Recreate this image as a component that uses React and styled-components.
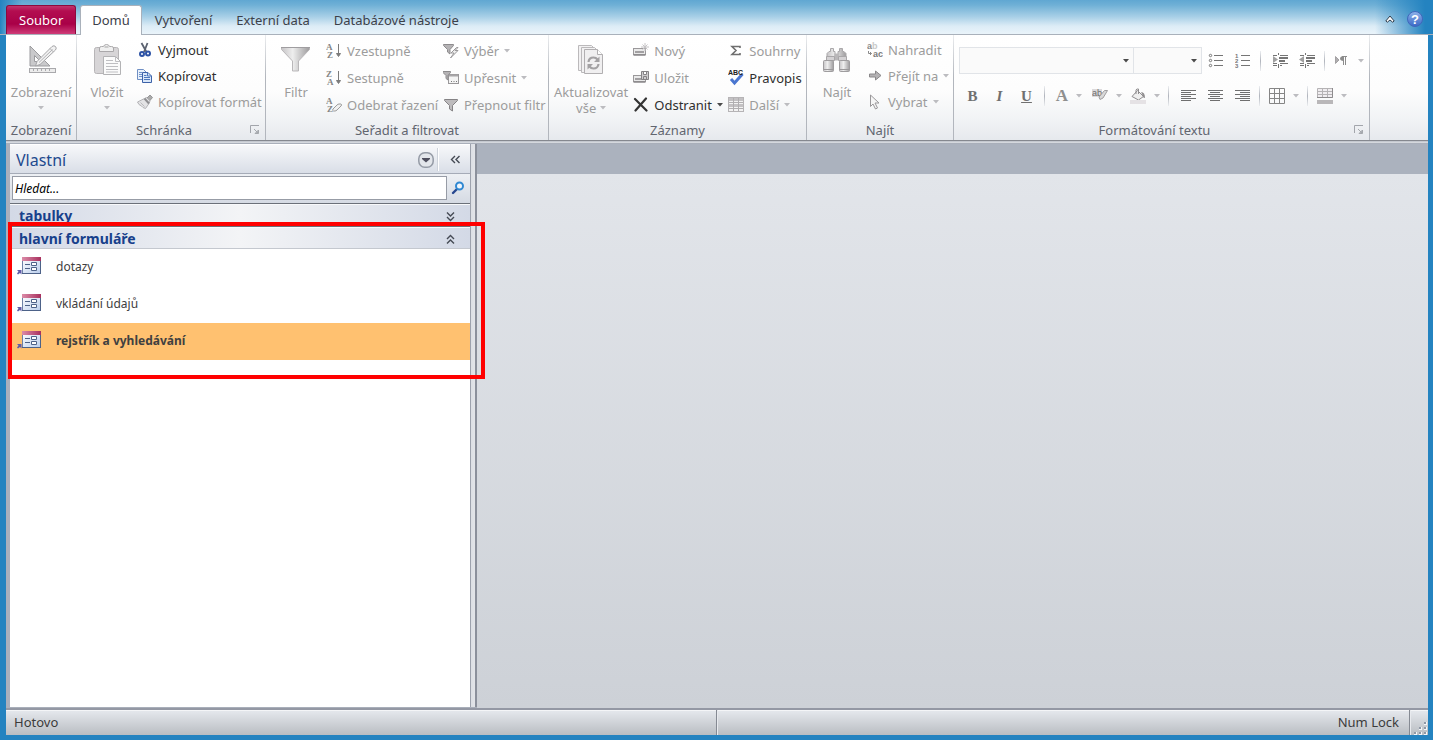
import React, { useState } from "react";
import styled, { createGlobalStyle, css } from "styled-components";

const GlobalStyle = createGlobalStyle`
    * {
        box-sizing: border-box;
    }

    body {
        margin: 0;
        font-family: "Noto Sans", "Open Sans", sans-serif;
        font-size: 13px;
        line-height: 16px;
        color: #3b3b3b;
    }

    button, input, select {
        font: inherit;
        color: inherit;
        margin: 0;
    }

    button {
        padding: 0;
        border: 0;
        background: none;
        white-space: nowrap;
    }
`

const Window = styled.div`
    display: flex;
    flex-direction: column;
    min-height: 100vh;
    padding: 0 5px 5px 6px;
    background: #2483c0;
`

/* tabs */

const TabBar = styled.header`
    display: flex;
    align-items: flex-end;
    height: 35px;
    margin: 0 -5px 0 -6px;
    padding: 5px 10px 0 6px;
    border-bottom: 1px solid #a9b1bb;
    background:
        linear-gradient(to right, #2483c0 0, rgba(36, 131, 192, 0) 22px),
        linear-gradient(to left, #2483c0 0, #2483c0 8px, rgba(36, 131, 192, 0) 58px),
        linear-gradient(#60a7d2 0, #6fb0d6 5px, #a9d0e7 17px, #dcecf6 26px, #eaf4fa 34px);
`
const FileTab = styled.button`
    height: 29px;
    padding: 0 12px;
    margin-right: 4px;
    border: 1px solid #8c0a3c;
    border-bottom: 0;
    border-radius: 3px 3px 0 0;
    background: linear-gradient(#c0356b 0, #b30d50 5px, #a90047 18px, #cf3c78 28px);
    color: white;
`
const Tab = styled.button`
    height: 29px;
    padding: 0 12px;
    color: #3c4049;

    ${({ $active }) => $active && css`
        height: 30px;
        margin: 0 1px -1px 0;
        border: 1px solid #a9b1bb;
        border-bottom: 0;
        border-radius: 3px 3px 0 0;
        padding: 0 11px 1px;
        background: white;
    `}
`
const TabTools = styled.div`
    display: flex;
    align-items: center;
    gap: 12px;
    height: 29px;
    margin-left: auto;
    padding-bottom: 2px;

    button {
        display: flex;
    }
`

/* ribbon */

const RibbonBox = styled.section`
    display: flex;
    height: 106px;
    background: linear-gradient(#ffffff 0, #fdfdfd 55px, #f1f3f5 85px, #e6e9ed 105px);
    border-bottom: 1px solid #85888f;
`
const RibbonEdge = styled.div`
    height: 3px;
    border-bottom: 1px solid #a9afba;
    background: linear-gradient(#bcc0c8, #dde0e5);
`
const Group = styled.div`
    display: flex;
    flex-direction: column;
    flex: none;
    min-width: ${({ $min }) => $min}px;
    padding: 0 1px;
    border-right: 1px solid;
    border-image: linear-gradient(#eceef0, #b2b6bd 40%, #b2b6bd) 1;
`
const GroupBody = styled.div`
    display: flex;
    flex: 1;
    padding-left: ${({ $pad = 4 }) => $pad}px;
`
const GroupTitle = styled.div`
    display: flex;
    align-items: center;
    height: 18px;
    padding-bottom: 2px;
    color: #61656f;

    span {
        flex: 1;
        text-align: center;
        white-space: nowrap;
    }

    button {
        display: flex;
        width: 14px;
    }
`
const BigButton = styled.button`
    display: flex;
    flex-direction: column;
    align-items: center;
    min-width: ${({ $min }) => $min}px;
    padding-top: 9px;
    color: #9c9c9c;

    > svg {
        margin-bottom: 8px;
    }
`
const MenuMark = styled.span`
    display: flex;
    align-items: center;
    gap: 4px;
    min-height: 16px;
`
const Spacer = styled.span`
    width: 5px;
`
const Column = styled.div`
    display: grid;
    grid-auto-rows: ${({ $row = 27 }) => $row}px;
    align-content: start;
    min-width: ${({ $min }) => $min}px;
    padding-top: 2px;
`
const SmallButton = styled.button`
    display: flex;
    align-items: center;
    gap: 5px;
    color: ${({ disabled }) => (disabled ? "#9c9c9c" : "#2f2f2f")};
`
const FormatTools = styled.div`
    display: flex;
    flex-direction: column;
    gap: 8px;
    padding-top: 12px;
`
const ToolRow = styled.div`
    display: flex;
    align-items: center;
    height: 27px;
`
const Tool = styled.button`
    display: flex;
    align-items: center;
    justify-content: center;
    gap: 8px;
    width: ${({ $split }) => ($split ? 38 : 27)}px;
    height: 26px;
`
const Letter = styled.span`
    font-family: "Liberation Serif", serif;
    font-size: ${({ $big }) => ($big ? 17 : 15)}px;
    font-weight: bold;
    font-style: ${({ $italic }) => ($italic ? "italic" : "normal")};
    text-decoration: ${({ $underline }) => ($underline ? "underline" : "none")};
    color: ${({ $big }) => ($big ? "#8f8f8f" : "#707070")};
`
const Divider = styled.span`
    width: 1px;
    height: 20px;
    margin: 0 5px 0 4px;
    background: linear-gradient(#eceef1, #b0b4bc, #eceef1);
`
const Picker = styled.label`
    display: flex;
    align-items: center;
    width: ${({ $width }) => $width}px;
    height: 27px;
    padding-right: 4px;
    border: 1px solid #e1e4e8;
    background: #fafafa;

    & + & {
        margin-left: -1px;
    }

    select {
        flex: 1;
        min-width: 0;
        height: 25px;
        border: 0;
        appearance: none;
        background: none;
        opacity: 1;
    }
`

/* navigation pane */

const Workspace = styled.main`
    display: flex;
    flex: 1;
`
const Pane = styled.aside`
    display: flex;
    flex-direction: column;
    width: 471px;
    padding: 1px 7px 0 0;
    border-left: 4px solid #a9afbc;
    background: linear-gradient(to left, #8b909b 0, #8b909b 2px, #e3e5e9 2px, #dcdfe4 6px, #9da2ad 6px, #9da2ad 7px, #ffffff 7px);
    border-bottom: 1px solid #a9afba;
`
const PaneHeader = styled.div`
    display: flex;
    align-items: center;
    height: 29px;
    padding: 1px 9px 0 6px;
    border-bottom: 1px solid #a5abb7;
    background: linear-gradient(#f7f8fa, #d9dee7);

    h1 {
        flex: 1;
        margin: 0;
        font-size: 16px;
        line-height: 24px;
        font-weight: normal;
        color: #1e4a8e;
    }

    button {
        display: flex;
    }
`
const PaneSplit = styled.span`
    width: 2px;
    height: 23px;
    margin: 0 11px 0 3px;
    border-left: 1px solid #cdd2da;
    background: white;
`
const SearchRow = styled.form`
    display: flex;
    align-items: center;
    gap: 4px;
    height: 29px;
    padding: 0 5px 1px 2px;
    background: linear-gradient(#edf0f4, #d5dae3);

    input {
        flex: 1;
        height: 24px;
        min-width: 0;
        padding: 0 2px;
        border: 1px solid #979ca6;
        background: white;
        font-size: 12px;
        font-style: italic;
    }

    input::placeholder {
        color: #000;
        opacity: 1;
    }

    button {
        display: flex;
    }
`
const NavSection = styled.section`
    position: relative;
`
const SectionHeader = styled.button`
    display: flex;
    align-items: center;
    justify-content: space-between;
    width: 100%;
    height: 23px;
    padding: 2px 14px 0 9px;
    border-top: 1px solid #6b7079;
    box-shadow: inset 0 1px 0 #f8f9fb;
    background: linear-gradient(to right, #d3d9e6, #f3f4f6 50%, #d3d9e6);
    font-size: 14px;
    font-weight: bold;
    color: #17408b;
`
const NavList = styled.ul`
    margin: 0;
    padding: 0;
    box-shadow: 0 -1px 0 #c4c8cf;
    list-style: none;
`
const NavItem = styled.button`
    display: flex;
    align-items: center;
    gap: 14px;
    width: 100%;
    height: 37px;
    padding: 0 0 1px 6px;
    font-size: 12px;
    color: #404040;
    background: ${({ $selected }) => ($selected ? "#ffc170" : "white")};
    font-weight: ${({ $selected }) => ($selected ? "bold" : "normal")};
`
/* red outline lying over the section and the pane's edge */
const Highlight = styled.div`
    position: absolute;
    inset: -4px -15px -19px -2px;
    border: 4px solid #ff0000;
    pointer-events: none;
    z-index: 2;
`
const Canvas = styled.div`
    flex: 1;
    border-top: 30px solid #abb2be;
    background: linear-gradient(#e2e5ea, #cdd1d7);
`

/* status bar */

const StatusBar = styled.footer`
    display: flex;
    height: 27px;
    border-top: 2px solid #9498a4;
    box-shadow: inset 0 1px 0 #f4f5f7;
    background: linear-gradient(#e6e9ee, #b9bdc2);
`
const StatusHalf = styled.div`
    display: flex;
    flex: 1;
`
const StatusCell = styled.div`
    display: flex;
    align-items: center;
    justify-content: ${({ $end }) => ($end ? "flex-end" : "flex-start")};
    flex: 1;
    padding: 0 10px 2px 8px;
    border-right: 1px solid #858a93;
    box-shadow: 1px 0 0 #e8eaee;
`
const Grip = styled.div`
    display: flex;
    align-items: flex-end;
    justify-content: flex-end;
    width: 18px;
`

/* icons */

const Icon = ({ size = 16, width, height, children }) => (
    <svg width={width || size} height={height || size} viewBox={`0 0 ${width || size} ${height || size}`} fill="none" aria-hidden="true">
        {children}
    </svg>
)

const Arrow = ({ dark }) => (
    <Icon width={6} height={4}>
        <path d="M0 0h6L3 3.5z" fill={dark ? "#4a4a4a" : "#bcbcc0"} />
    </Icon>
)

const DesignIcon = () => (
    <Icon size={32}>
        <path d="M5 2v20h20z M9.500 11.500v6h6z" fill="#c9c9cb" stroke="#9b9b9e" fillRule="evenodd" />
        <path d="M12 17.500L27 2.500q2-1.500 3.500 0t0 3.500L15 20.500l-4.500 1.500z" fill="#f2f2f2" stroke="#a4a4a7" />
        <path d="M25 4.500l3.500 3.500M14 18.500L27.500 5.500" stroke="#b0b0b3" />
        <rect x="4.500" y="24.500" width="26" height="4" fill="#ececec" stroke="#a9a9ac" />
        <path d="M8.500 25v2M12.500 25v2M16.500 25v2M20.500 25v2M24.500 25v2" stroke="#a9a9ac" />
    </Icon>
)

const PasteIcon = () => (
    <Icon size={32}>
        <rect x="3.500" y="3.500" width="24" height="26" rx="2" fill="#d7d5d7" stroke="#b7b5b7" />
        <path d="M8.500 7.500V4q0-1.500 2-1.500h2Q13 .5 15.500.5T18.500 2.500h2q2 0 2 1.500v3.500z" fill="#f0f0f0" stroke="#aaa8aa" />
        <path d="M13.500 3h4" stroke="#a5a5a5" />
        <path d="M12.500 12.500h12l5 5v13h-17z" fill="#fbfbfb" stroke="#b3b3b5" />
        <path d="M24.500 12.500v5h5M15 16.500h7M15 19.500h12M15 22.500h12M15 25.500h12M15 28h12" stroke="#bfbfc2" />
    </Icon>
)

const CutIcon = () => (
    <Icon>
        <path d="M4.500 1l5 9M10.500 1L7 10" stroke="#5b6270" strokeWidth="1.800" />
        <ellipse cx="5" cy="12" rx="2" ry="2" stroke="#2c52a5" strokeWidth="2" />
        <ellipse cx="11" cy="11.500" rx="2" ry="2" stroke="#2c52a5" strokeWidth="2" />
    </Icon>
)

const CopyIcon = () => (
    <Icon>
        <path d="M.5 1.500h6l2.500 2.500v7.500H.5z" fill="#e9f1fb" stroke="#6f8fc4" />
        <path d="M2 4.500h3M2 6.500h3M2 8.500h3" stroke="#6f94cd" />
        <path d="M5.500 4.500H11l3.500 3.500v6.500h-9z" fill="#d9e7f9" stroke="#3d62a8" />
        <path d="M10.500 4.500v3.500h4M7 7.500h2.500M7 9.500h6M7 11.500h6" stroke="#4d78bd" />
    </Icon>
)

const BrushIcon = () => (
    <Icon>
        <path d="M10 4l3-3 2.500 2.500L12.500 7z" fill="#aaa" stroke="#969698" />
        <path d="M7.500 4.500l2-1L13 7l-1 2.500-3.500 5-2.500-1L4.500 12 2 10.500.5 8z" fill="#e3e3e5" stroke="#b3b3b6" />
        <path d="M7.500 4.500l4.500 5" stroke="#8f8f92" strokeWidth="2" />
        <path d="M3.500 8.500l4 4" stroke="#b9b9bc" />
    </Icon>
)

const Defs = () => (
    <svg width="0" height="0" style={{ position: "absolute" }} aria-hidden="true">
        <defs>
            <linearGradient id="metal">
                <stop offset="0" stopColor="#c6c4c6" />
                <stop offset="0.4" stopColor="#eeeeee" />
                <stop offset="1" stopColor="#9e9c9e" />
            </linearGradient>
            <linearGradient id="help" x2="0" y2="1">
                <stop offset="0" stopColor="#8fb3ea" />
                <stop offset="1" stopColor="#3a68c6" />
            </linearGradient>
            <linearGradient id="formTop">
                <stop offset="0" stopColor="#dc8ca8" />
                <stop offset="1" stopColor="#a8305e" />
            </linearGradient>
            <linearGradient id="formBody" x2="1" y2="1">
                <stop offset="0" stopColor="#ffffff" />
                <stop offset="1" stopColor="#b9cdec" />
            </linearGradient>
        </defs>
    </svg>
)

const FunnelIcon = () => (
    <Icon size={32}>
        <path d="M1.500 3.500h28v2L18.500 17v10h-6V17L1.500 5.500z" fill="url(#metal)" stroke="#b9b7b9" />
        <path d="M1 3.500h29" stroke="#9f9da0" />
    </Icon>
)

const SortIcon = ({ top, bottom, eraser }) => (
    <Icon>
        <text x="0" y="7" fontFamily="Liberation Serif" fontWeight="bold" fontSize="9" fill="#858585">{top}</text>
        <text x="1" y="15" fontFamily="Liberation Serif" fontWeight="bold" fontSize="9" fill="#858585">{bottom}</text>
        {eraser
            ? <path d="M7 12l4-4q1-1 2-1h2q1.500.5 0 2l-4 4q-1 1-2 1H7.500q-1.500-.5-.5-2z" fill="#f1f1f1" stroke="#9c9c9c" />
            : <path d="M12.500 1v11M10.500 10.500h4l-2 3z" fill="#7b7b7b" stroke="#7b7b7b" />}
    </Icon>
)

const SelectionIcon = () => (
    <Icon>
        <path d="M.5 1.500h10v1L7 6.500V11L4.500 9V6.500L.5 2.500z" fill="#b5b3b5" stroke="#8d8b8d" />
        <path d="M13.500 4.500L8 10h3l-3.500 5 7.500-7.500h-3l3-3z" fill="#efefef" stroke="#9a989a" />
    </Icon>
)

const AdvancedIcon = () => (
    <Icon>
        <rect x="5.500" y="4.500" width="10" height="9" fill="#f4f4f4" stroke="#9a989a" />
        <path d="M6 5.500h9" stroke="#a8a6a8" strokeWidth="2" />
        <path d="M8 11.500h1M10.500 11.500h1M13 11.500h1" stroke="#777" />
        <path d="M0 1.500h7.500v1L5 5.500V10L3 8.500v-3L0 2.500z" fill="#b5b3b5" stroke="#8d8b8d" />
    </Icon>
)

const ToggleIcon = () => (
    <Icon>
        <path d="M1.500 2.500h13v1L9.500 8.500V14l-3-2V8.500L1.500 3.500z" fill="#bdbbbd" stroke="#858385" />
    </Icon>
)

const RefreshIcon = () => (
    <Icon size={32}>
        <path d="M3.500 1.500h13l3 3v22h-16z" fill="#f2f1f2" stroke="#bbb9bb" />
        <path d="M6.500 3.500h13l3 3v22h-16z" fill="#f2f1f2" stroke="#bbb9bb" />
        <path d="M9.500 5.500h13l5 5v19h-18z" fill="#f0eff0" stroke="#b1afb1" />
        <path d="M22.500 5.500v5h5" fill="#fff" stroke="#b1afb1" />
        <path d="M13.500 18q.5-4.500 5-4.500 2.500 0 4 2M23.500 20q-.5 4.500-5 4.500-2.500 0-4-2" stroke="#a3a1a3" strokeWidth="2.200" />
        <path d="M24.500 12.500v5.500h-5.500zM12.500 25.500V20h5.500z" fill="#a3a1a3" />
    </Icon>
)

const RecordIcon = ({ save }) => (
    <Icon>
        <rect x=".5" y="5.500" width="12" height="6" fill="#e9e9e9" stroke="#9a989a" />
        <path d="M2 9h9M.5 12h12" stroke="#8a888a" strokeWidth="1.500" />
        {save
            ? <path d="M8.500 1.500h7v8h-7zM10.500 1.500v3h3v-3M10.500 9.500v-3h3v3" fill="#cfcdcf" stroke="#858385" />
            : <path d="M12 0v8M8 4h8M9.500 1.500l5 5M14.500 1.500l-5 5" stroke="#c6c4c6" />}
    </Icon>
)

const DeleteIcon = () => (
    <Icon>
        <path d="M2 2l11.500 11.500M13 1.500L2.500 13.500" stroke="#343434" strokeWidth="2.200" strokeLinecap="round" />
    </Icon>
)

const SumIcon = () => (
    <Icon>
        <path d="M12 5V3.500H4L8 7.500 4 11.500h8V10" stroke="#6f6f6f" strokeWidth="1.600" />
    </Icon>
)

const SpellIcon = () => (
    <Icon>
        <path d="M3 9l3.500 4L14.500 4" stroke="#4a76d0" strokeWidth="3" />
        <text x="0" y="5" fontFamily="Liberation Sans" fontWeight="bold" fontSize="7" fill="#222">ABC</text>
    </Icon>
)

const MoreIcon = () => (
    <Icon>
        <rect x=".5" y=".5" width="15" height="14" fill="#f2f2f2" stroke="#b6b4b6" />
        <path d="M1 2.500h14M1 8.500h14" stroke="#c3c1c3" strokeWidth="3" />
        <path d="M1 5.500h14M1 11.500h14M5.500 1v13M10.500 1v13" stroke="#b0aeb0" />
    </Icon>
)

const FindIcon = () => (
    <Icon size={32}>
        <path d="M9.500 4.500h3v3h1.500v6h-8v-4l2-2h1.500zM18.500 4.500h3v3H23l2 2v4h-8v-6h1.500z" fill="url(#metal)" stroke="#aaa8aa" />
        <path d="M13.500 9.500h4v7h-4z" fill="#b9b7b9" />
        <path d="M5.500 12.500h8v4h-8zM17.500 12.500h8v4h-8z" fill="#d4d2d4" stroke="#a9a7a9" />
        <rect x="2.500" y="16.500" width="10" height="11" rx="1" fill="url(#metal)" stroke="#9f9d9f" />
        <rect x="18.500" y="16.500" width="10" height="11" rx="1" fill="url(#metal)" stroke="#9f9d9f" />
        <path d="M3 25.500h9M19 25.500h9" stroke="#9b999b" />
    </Icon>
)

const ReplaceIcon = () => (
    <Icon>
        <text x="0" y="7" fontFamily="Liberation Sans" fontWeight="bold" fontSize="9" fill="#8a8a8a">
            a<tspan fill="#c9c9c9">b</tspan>
        </text>
        <text x="6" y="15" fontFamily="Liberation Sans" fontWeight="bold" fontSize="9" fill="#7b7b7b">ac</text>
        <path d="M1.500 9v2.500h3M3 10l1.500 1.500L3 13" stroke="#8a8a8a" />
    </Icon>
)

const GoToIcon = () => (
    <Icon>
        <path d="M2.500 6h6V3l5.500 4.500L8.500 12V9h-6z" fill="#b4b2b4" stroke="#8a888a" />
    </Icon>
)

const CursorIcon = () => (
    <Icon>
        <path d="M3.500 1v11.500l2.500-2.500 2.500 5 2-1L8 9h4z" fill="#f6f6f6" stroke="#9a989a" />
    </Icon>
)

const ListIcon = ({ numbers }) => (
    <Icon>
        {[2, 7, 12].map((y, i) => (
            <g key={y}>
                <path d={`M6 ${y + 0.5}h9`} stroke="#757575" />
                {numbers
                    ? <text x="0" y={y + 3} fontFamily="Liberation Sans" fontWeight="bold" fontSize="6" fill="#757575">{i + 1}</text>
                    : <circle cx="2.500" cy={y + 0.5} r="1.200" stroke="#757575" />}
            </g>
        ))}
    </Icon>
)

const IndentIcon = ({ back }) => (
    <Icon>
        <path d="M1 2.500h4M8 2.500h8M1 10.500h4M8 10.500h8M1 12.500h4M8 12.500h2" stroke="#757575" />
        <path d="M7 5h9M7 8h6" stroke="#757575" strokeWidth="2" />
        <path d="M6.500 0v2M6.500 11v4" stroke="#757575" />
        <path d={back ? "M5 3v7L0 6.500z" : "M1 3v7L6 6.500z"} fill="#a0a0a0" />
    </Icon>
)

const ParagraphIcon = () => (
    <Icon>
        <path d="M1.500 3.500v7l3.500-3.500z" fill="#b0aeb0" stroke="#a3a1a3" />
        <path d="M9.500 12V3.500M11.500 12V3.500M8 3.500h5" stroke="#8c8c8c" />
        <path d="M9.500 3h-1q-2.500.5-2.500 2.500T9.500 8z" fill="#8c8c8c" />
    </Icon>
)

const AlignIcon = ({ kind }) => {
    const widths = [15, 10, 15, 10, 15, 10]
    return (
        <Icon>
            {widths.map((w, i) => {
                const x = kind === "left" ? 1 : kind === "right" ? 16 - w : 1 + Math.floor((15 - w) / 2)
                return <rect key={i} x={x} y={2 + i * 2} width={w} height="1" fill="#6f6f6f" />
            })}
        </Icon>
    )
}

const HighlightIcon = () => (
    <Icon>
        <rect x="0" y="1" width="10" height="8" fill="#dcdadc" />
        <text x="0" y="8" fontFamily="Liberation Sans" fontSize="9" fill="#6c6c6c">ab</text>
        <path d="M15.500 2.500L11 10l-3 1.500-1-2.500 5.500-6.500z" fill="#d9d9d9" stroke="#a09ea0" />
    </Icon>
)

const FillIcon = () => (
    <Icon>
        <path d="M7.500 2.500l6 6-5 3.500L2 8.500z" fill="#efefef" stroke="#8f8d8f" />
        <path d="M6 6V2q.5-1.500 2.500-1V6" stroke="#8f8d8f" />
        <path d="M11 4q4 0 4 6-2.500 0-2.500-3z" fill="#8f8d8f" />
        <rect x="0" y="12" width="16" height="4" fill="#e5e2e5" />
    </Icon>
)

const GridIcon = () => (
    <Icon>
        <path d="M.5.5h15v15H.5zM.5 5.500h15M.5 10.500h15M5.500.5v15M10.500.5v15" stroke="#858585" />
    </Icon>
)

const RowColorIcon = () => (
    <Icon>
        <path d="M.5.5h15v9H.5zM.5 3.500h15M.5 6.500h15M5.500.5v9M10.500.5v9" fill="#f0edf0" stroke="#b5b3b5" />
        <path d="M0 9.500h15.500V0" stroke="#8d8b8d" />
        <rect x="0" y="12" width="16" height="4" fill="#b9b7b9" />
    </Icon>
)

const LauncherIcon = () => (
    <Icon size={10}>
        <path d="M.5 8V.5H9" stroke="#a2a5ab" />
        <path d="M4 4l4 4M5 8.500h3.500V5z" stroke="#a5a8ad" fill="#b4b7bc" />
    </Icon>
)

const CollapseIcon = () => (
    <Icon width={10} height={8}>
        <path d="M.8 6L5 1l4.200 5-1.500 1.200L5 5 2.300 7.200z" fill="white" stroke="#2f3d4c" />
    </Icon>
)

const HelpIcon = () => (
    <Icon>
        <circle cx="8" cy="8" r="7.500" fill="url(#help)" stroke="#3f68bb" />
        <text x="8" y="13" textAnchor="middle" fontFamily="Liberation Sans" fontWeight="bold" fontSize="13" fill="white">?</text>
    </Icon>
)

const PaneMenuIcon = () => (
    <Icon>
        <rect x=".8" y=".8" width="14.400" height="14.400" rx="6" fill="#e3e6eb" stroke="#959ba6" strokeWidth="1.500" />
        <path d="M4 6h8v1L8 10.500 4 7z" fill="#4f4f5e" />
    </Icon>
)

const Chevrons = ({ dir }) => {
    const turn = { left: 0, up: 90, down: 270 }[dir]
    return (
        <Icon width={11} height={11}>
            <path
                d="M5 2L1.500 5.500 5 9M9.500 2L6 5.500 9.500 9"
                stroke="#454a54"
                strokeWidth="1.400"
                transform={`rotate(${turn} 5.500 5.500)`}
            />
        </Icon>
    )
}

const SearchIcon = () => (
    <Icon width={14} height={14}>
        <path d="M6 8L2 12" stroke="#27478f" strokeWidth="2.400" strokeLinecap="round" />
        <circle cx="8.500" cy="5" r="3.500" fill="#f0f6fc" stroke="#3189d2" strokeWidth="2" />
    </Icon>
)

const FormIcon = () => (
    <Icon width={26} height={20}>
        <rect x="6.500" y="1.500" width="18" height="15" fill="url(#formBody)" stroke="#6d82a6" />
        <path d="M6 16.500h19M24.500 4v13" stroke="#4d6288" />
        <rect x="6" y="0" width="19" height="4" fill="url(#formTop)" />
        <path d="M9 7.500h5M9 11.500h5" stroke="#4d6288" />
        <path d="M15.500 5.500h5v3h-5zM15.500 10.500h5v3h-5z" fill="white" stroke="#4d6288" />
        <path d="M1 13h4.500v4.500L4 16l-2 1.500-1-1L2.500 14.500z" fill="#5f5da8" />
    </Icon>
)

const GripIcon = () => (
    <Icon width={14} height={14}>
        <path d="M10 1h3v3h-3zM5 6h3v3H5zM10 6h3v3h-3zM0 11h3v3H0zM5 11h3v3H5zM10 11h3v3h-3z" fill="#f5f6f8" />
        <path d="M10 1h2v2h-2zM5 6h2v2H5zM10 6h2v2h-2zM0 11h2v2H0zM5 11h2v2H5zM10 11h2v2h-2z" fill="#8f98a6" />
    </Icon>
)

/* components */

const Small = ({ icon, text, menu, on }) => (
    <SmallButton type="button" disabled={!on}>
        {icon}
        {text}
        {menu && <Arrow dark={on} />}
    </SmallButton>
)

const RibbonGroup = ({ title, min, pad, launcher, children }) => (
    <Group $min={min}>
        <GroupBody $pad={pad}>{children}</GroupBody>
        <GroupTitle>
            <span>{title}</span>
            {launcher && <button type="button" aria-label={`Možnosti: ${title}`}><LauncherIcon /></button>}
        </GroupTitle>
    </Group>
)

const SplitTool = ({ label, children }) => (
    <Tool type="button" $split disabled aria-label={label}>
        {children}
        <Arrow />
    </Tool>
)

function Ribbon() {
    return (
        <RibbonBox>
            <RibbonGroup title="Zobrazení" min={71} pad={0}>
                <BigButton $min={68} type="button" disabled>
                    <DesignIcon />
                    Zobrazení
                    <MenuMark><Arrow /></MenuMark>
                </BigButton>
            </RibbonGroup>

            <RibbonGroup title="Schránka" min={189} launcher>
                <BigButton $min={50} type="button" disabled>
                    <PasteIcon />
                    Vložit
                    <MenuMark><Arrow /></MenuMark>
                </BigButton>
                <Spacer />
                <Column $row={26} $min={124}>
                    <Small on icon={<CutIcon />} text="Vyjmout" />
                    <Small on icon={<CopyIcon />} text="Kopírovat" />
                    <Small icon={<BrushIcon />} text="Kopírovat formát" />
                </Column>
            </RibbonGroup>

            <RibbonGroup title="Seřadit a filtrovat" min={283}>
                <BigButton $min={50} type="button" disabled>
                    <FunnelIcon />
                    Filtr
                </BigButton>
                <Spacer />
                <Column $min={117}>
                    <Small icon={<SortIcon top="A" bottom="Z" />} text="Vzestupně" />
                    <Small icon={<SortIcon top="Z" bottom="A" />} text="Sestupně" />
                    <Small icon={<SortIcon top="A" bottom="Z" eraser />} text="Odebrat řazení" />
                </Column>
                <Column $min={100}>
                    <Small menu icon={<SelectionIcon />} text="Výběr" />
                    <Small menu icon={<AdvancedIcon />} text="Upřesnit" />
                    <Small icon={<ToggleIcon />} text="Přepnout filtr" />
                </Column>
            </RibbonGroup>

            <RibbonGroup title="Záznamy" min={258}>
                <BigButton $min={72} type="button" disabled>
                    <RefreshIcon />
                    Aktualizovat
                    <MenuMark>vše <Arrow /></MenuMark>
                </BigButton>
                <Spacer />
                <Column $min={95}>
                    <Small icon={<RecordIcon />} text="Nový" />
                    <Small icon={<RecordIcon save />} text="Uložit" />
                    <Small on menu icon={<DeleteIcon />} text="Odstranit" />
                </Column>
                <Column $min={72}>
                    <Small icon={<SumIcon />} text="Souhrny" />
                    <Small on icon={<SpellIcon />} text="Pravopis" />
                    <Small menu icon={<MoreIcon />} text="Další" />
                </Column>
            </RibbonGroup>

            <RibbonGroup title="Najít" min={147}>
                <BigButton $min={50} type="button" disabled>
                    <FindIcon />
                    Najít
                </BigButton>
                <Spacer />
                <Column $row={26} $min={80}>
                    <Small icon={<ReplaceIcon />} text="Nahradit" />
                    <Small menu icon={<GoToIcon />} text="Přejít na" />
                    <Small menu icon={<CursorIcon />} text="Vybrat" />
                </Column>
            </RibbonGroup>

            <RibbonGroup title="Formátování textu" min={416} launcher>
                <FormatTools>
                    <ToolRow>
                        <Picker $width={175}>
                            <select disabled aria-label="Písmo" />
                            <Arrow dark />
                        </Picker>
                        <Picker $width={69}>
                            <select disabled aria-label="Velikost písma" />
                            <Arrow dark />
                        </Picker>
                        <Tool type="button" disabled aria-label="Odrážky"><ListIcon /></Tool>
                        <Tool type="button" disabled aria-label="Číslování"><ListIcon numbers /></Tool>
                        <Divider />
                        <Tool type="button" disabled aria-label="Zvětšit odsazení"><IndentIcon /></Tool>
                        <Tool type="button" disabled aria-label="Zmenšit odsazení"><IndentIcon back /></Tool>
                        <Divider />
                        <SplitTool label="Směr textu"><ParagraphIcon /></SplitTool>
                    </ToolRow>
                    <ToolRow>
                        <Tool type="button" disabled aria-label="Tučné"><Letter>B</Letter></Tool>
                        <Tool type="button" disabled aria-label="Kurzíva"><Letter $italic>I</Letter></Tool>
                        <Tool type="button" disabled aria-label="Podtržené"><Letter $underline>U</Letter></Tool>
                        <Divider />
                        <SplitTool label="Barva písma"><Letter $big>A</Letter></SplitTool>
                        <SplitTool label="Barva zvýraznění"><HighlightIcon /></SplitTool>
                        <SplitTool label="Barva pozadí"><FillIcon /></SplitTool>
                        <Divider />
                        <Tool type="button" disabled aria-label="Vlevo"><AlignIcon kind="left" /></Tool>
                        <Tool type="button" disabled aria-label="Na střed"><AlignIcon kind="center" /></Tool>
                        <Tool type="button" disabled aria-label="Vpravo"><AlignIcon kind="right" /></Tool>
                        <Divider />
                        <SplitTool label="Mřížka"><GridIcon /></SplitTool>
                        <Divider />
                        <SplitTool label="Barva řádků"><RowColorIcon /></SplitTool>
                    </ToolRow>
                </FormatTools>
            </RibbonGroup>
        </RibbonBox>
    )
}

const forms = ["dotazy", "vkládání údajů", "rejstřík a vyhledávání"]

function Navigation() {
    const [selected, setSelected] = useState("rejstřík a vyhledávání")
    const [query, setQuery] = useState("")

    return (
        <Pane>
            <PaneHeader>
                <h1>Vlastní</h1>
                <button type="button" aria-label="Kategorie"><PaneMenuIcon /></button>
                <PaneSplit />
                <button type="button" aria-label="Sbalit podokno"><Chevrons dir="left" /></button>
            </PaneHeader>
            <SearchRow onSubmit={(e) => e.preventDefault()}>
                <input
                    type="text"
                    aria-label="Hledat"
                    placeholder="Hledat..."
                    value={query}
                    onChange={(e) => setQuery(e.target.value)}
                />
                <button type="submit" aria-label="Hledat"><SearchIcon /></button>
            </SearchRow>
            <NavSection>
                <SectionHeader type="button">tabulky<Chevrons dir="down" /></SectionHeader>
            </NavSection>
            <NavSection>
                <SectionHeader type="button">hlavní formuláře<Chevrons dir="up" /></SectionHeader>
                <NavList>
                    {forms.map((name) => (
                        <li key={name}>
                            <NavItem type="button" $selected={name === selected} onClick={() => setSelected(name)}>
                                <FormIcon />
                                {name}
                            </NavItem>
                        </li>
                    ))}
                </NavList>
                <Highlight />
            </NavSection>
        </Pane>
    )
}

export default function App() {
    return (
        <Window>
            <GlobalStyle />
            <Defs />
            <TabBar>
                <FileTab type="button">Soubor</FileTab>
                <Tab type="button" $active>Domů</Tab>
                <Tab type="button">Vytvoření</Tab>
                <Tab type="button">Externí data</Tab>
                <Tab type="button">Databázové nástroje</Tab>
                <TabTools>
                    <button type="button" aria-label="Minimalizovat pás karet"><CollapseIcon /></button>
                    <button type="button" aria-label="Nápověda"><HelpIcon /></button>
                </TabTools>
            </TabBar>
            <Ribbon />
            <RibbonEdge />
            <Workspace>
                <Navigation />
                <Canvas />
            </Workspace>
            <StatusBar>
                <StatusHalf>
                    <StatusCell>Hotovo</StatusCell>
                </StatusHalf>
                <StatusHalf>
                    <StatusCell $end>Num Lock</StatusCell>
                    <Grip><GripIcon /></Grip>
                </StatusHalf>
            </StatusBar>
        </Window>
    )
}
